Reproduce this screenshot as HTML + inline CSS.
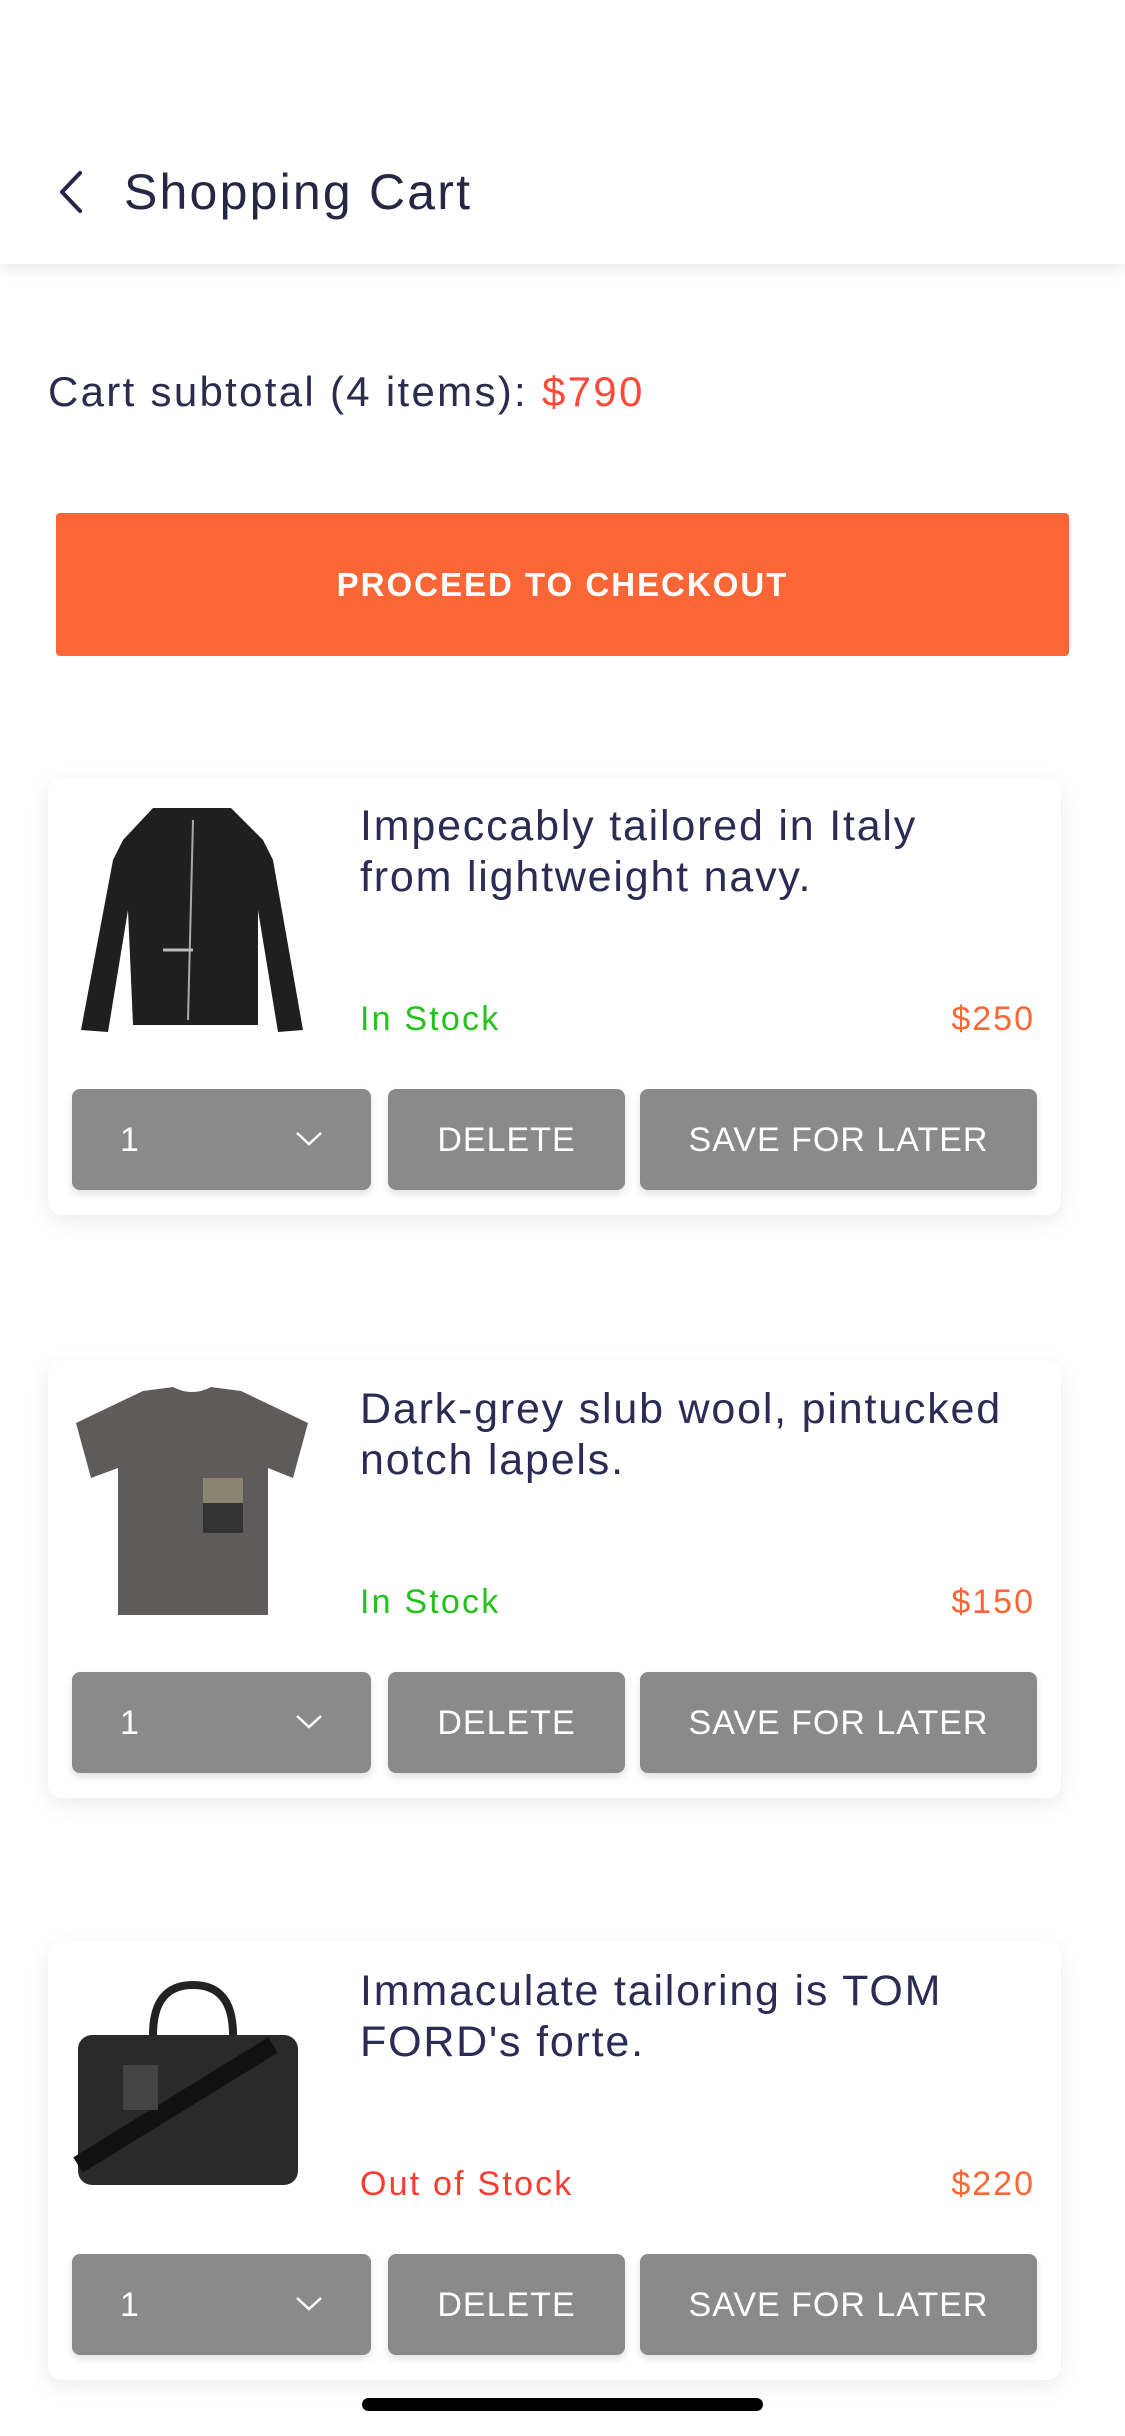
<!DOCTYPE html>
<html><head><meta charset="utf-8"><style>
*{margin:0;padding:0;box-sizing:border-box}
body{width:1125px;height:2436px;background:#fff;font-family:"Liberation Sans",sans-serif;position:relative;overflow:hidden}
.hdr{position:absolute;left:0;top:0;width:1125px;height:264px;background:#fff;box-shadow:0 6px 14px rgba(0,0,0,0.08)}
.hdr .t{position:absolute;left:124px;top:163px;font-size:50px;letter-spacing:2.2px;color:#262645}
.sub{position:absolute;left:48px;top:368px;font-size:42px;letter-spacing:2.3px;color:#2b2b4d}
.sub span{color:#ff4a3a}
.btn{position:absolute;left:56px;top:513px;width:1013px;height:143px;background:#fa6635;border-radius:4px;color:#fff;font-weight:bold;font-size:33px;letter-spacing:2px;text-align:center;line-height:143px}
.card{position:absolute;left:48px;width:1013px;height:438px;background:#fff;border-radius:14px;box-shadow:0 6px 22px rgba(0,0,0,0.08)}
.img{position:absolute;left:25px;top:23px;width:238px;height:238px}
.title{position:absolute;left:312px;top:24px;font-size:43px;line-height:51px;letter-spacing:1.8px;color:#2b2b55;width:700px;white-space:nowrap}
.st{position:absolute;left:312px;top:223px;font-size:34px;letter-spacing:2.2px}
.pr{position:absolute;right:26px;top:223px;font-size:34px;letter-spacing:2px;color:#fa6635}
.b{position:absolute;top:312px;height:101px;background:#8a8a8a;border-radius:8px;color:#fff;font-size:34px;letter-spacing:1px;line-height:103px;text-align:center;box-shadow:0 4px 8px rgba(0,0,0,0.12)}
.home{position:absolute;left:362px;top:2398px;width:401px;height:13px;border-radius:7px;background:#000}
</style></head><body>
<div class="hdr">
<svg style="position:absolute;left:56px;top:170px" width="30" height="44" viewBox="0 0 30 44"><path d="M24 3 L6 22 L24 41" fill="none" stroke="#262645" stroke-width="4" stroke-linecap="round" stroke-linejoin="round"/></svg>
<div class="t">Shopping Cart</div>
</div>
<div class="sub">Cart subtotal (4 items): <span>$790</span></div>
<div class="btn">PROCEED TO CHECKOUT</div>

<div class="card" style="top:777px">
<svg class="img" viewBox="0 0 238 238"><path d="M80 8 L158 8 L190 40 L200 60 L230 230 L205 232 L185 110 L185 225 L60 225 L55 110 L35 232 L8 230 L40 60 L50 40 Z" fill="#1f1f1f"/><path d="M120 20 L115 220" stroke="#aaa" stroke-width="2"/><path d="M90 150 L120 150" stroke="#bbb" stroke-width="3"/></svg>
<div class="title">Impeccably tailored in Italy<br>from lightweight navy.</div>
<div class="st" style="color:#22c41c">In Stock</div><div class="pr">$250</div>
<div class="b" style="left:24px;width:299px;text-align:left;padding-left:48px">1<svg style="position:absolute;right:48px;top:42px" width="28" height="16" viewBox="0 0 28 16"><path d="M2 2 L14 13 L26 2" fill="none" stroke="#fff" stroke-width="2.5"/></svg></div>
<div class="b" style="left:340px;width:237px">DELETE</div>
<div class="b" style="left:592px;width:397px">SAVE FOR LATER</div>
</div>

<div class="card" style="top:1360px">
<svg class="img" viewBox="0 0 238 238"><path d="M70 8 L100 4 Q119 14 138 4 L168 8 L235 40 L220 95 L195 85 L195 232 L45 232 L45 85 L18 95 L3 40 Z" fill="#5f5b5a"/><rect x="130" y="95" width="40" height="55" fill="#8a8470"/><rect x="130" y="120" width="40" height="30" fill="#333"/></svg>
<div class="title">Dark-grey slub wool, pintucked<br>notch lapels.</div>
<div class="st" style="color:#22c41c">In Stock</div><div class="pr">$150</div>
<div class="b" style="left:24px;width:299px;text-align:left;padding-left:48px">1<svg style="position:absolute;right:48px;top:42px" width="28" height="16" viewBox="0 0 28 16"><path d="M2 2 L14 13 L26 2" fill="none" stroke="#fff" stroke-width="2.5"/></svg></div>
<div class="b" style="left:340px;width:237px">DELETE</div>
<div class="b" style="left:592px;width:397px">SAVE FOR LATER</div>
</div>

<div class="card" style="top:1942px">
<svg class="img" viewBox="0 0 238 238"><path d="M80 70 Q80 20 120 20 Q160 20 160 70" fill="none" stroke="#222" stroke-width="8"/><rect x="5" y="70" width="220" height="150" rx="14" fill="#2a2a2a"/><path d="M5 200 L200 80" stroke="#111" stroke-width="18"/><rect x="50" y="100" width="35" height="45" fill="#444"/></svg>
<div class="title">Immaculate tailoring is TOM<br>FORD's forte.</div>
<div class="st" style="color:#ff3b30">Out of Stock</div><div class="pr">$220</div>
<div class="b" style="left:24px;width:299px;text-align:left;padding-left:48px">1<svg style="position:absolute;right:48px;top:42px" width="28" height="16" viewBox="0 0 28 16"><path d="M2 2 L14 13 L26 2" fill="none" stroke="#fff" stroke-width="2.5"/></svg></div>
<div class="b" style="left:340px;width:237px">DELETE</div>
<div class="b" style="left:592px;width:397px">SAVE FOR LATER</div>
</div>
<div class="home"></div>
</body></html>
